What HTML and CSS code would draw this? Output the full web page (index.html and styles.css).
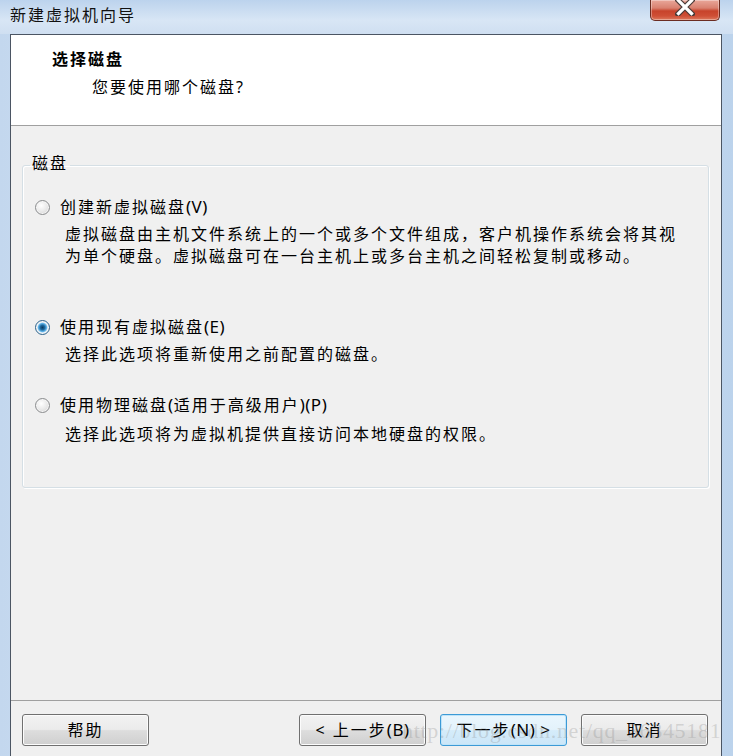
FILE: index.html
```html
<!DOCTYPE html>
<html lang="zh-CN">
<head>
<meta charset="utf-8">
<title>新建虚拟机向导</title>
<link rel="stylesheet" href="styles.css">
</head>
<body>
<div class="window">
  <div class="titlebar">
    <div class="title">新建虚拟机向导</div>
    <div class="close">
      <svg width="20" height="17" viewBox="0 0 20 17">
        <path d="M3 1 L17 15 M17 1 L3 15" stroke="#4a3b38" stroke-width="5.5" stroke-linecap="square" fill="none"/>
        <path d="M3.5 1.5 L16.5 14.5 M16.5 1.5 L3.5 14.5" stroke="#ffffff" stroke-width="3.2" stroke-linecap="square" fill="none"/>
      </svg>
    </div>
  </div>
  <div class="client">
    <div class="header">
      <div class="heading">选择磁盘</div>
      <div class="subheading">您要使用哪个磁盘?</div>
    </div>
    <div class="content">
      <fieldset class="group">
        <legend class="legend">磁盘</legend>
        <div class="option opt1">
          <div class="opt-label"><span class="radio"></span><span>创建新虚拟磁盘<span class="lat">(V)</span></span></div>
          <div class="opt-desc">虚拟磁盘由主机文件系统上的一个或多个文件组成，客户机操作系统会将其视<br>为单个硬盘。虚拟磁盘可在一台主机上或多台主机之间轻松复制或移动。</div>
        </div>
        <div class="option opt2">
          <div class="opt-label"><span class="radio checked"></span><span>使用现有虚拟磁盘<span class="lat">(E)</span></span></div>
          <div class="opt-desc">选择此选项将重新使用之前配置的磁盘。</div>
        </div>
        <div class="option opt3">
          <div class="opt-label"><span class="radio"></span><span>使用物理磁盘<span class="lat">(</span>适用于高级用户<span class="lat">)(P)</span></span></div>
          <div class="opt-desc">选择此选项将为虚拟机提供直接访问本地硬盘的权限。</div>
        </div>
      </fieldset>
    </div>
    <div class="footer">
      <button class="btn">帮助</button>
      <div class="spacer"></div>
      <button class="btn">&lt; 上一步<span class="lat">(B)</span></button>
      <button class="btn default">下一步<span class="lat">(N) &gt;</span></button>
      <button class="btn">取消</button>
    </div>
  </div>
  <div class="watermark">http://blog.csdn.net/qq_36345181</div>
</div>
</body>
</html>
```
FILE: styles.css
```css
html, body {
  margin: 0;
  padding: 0;
}
body {
  width: 733px;
  height: 756px;
  overflow: hidden;
  font-family: "Noto Sans", "Noto Sans CJK SC", sans-serif;
  font-size: 16px;
  letter-spacing: 2px;
  color: #000;
}
.lat {
  letter-spacing: 0.5px;
  font-size: 17px;
}
.window {
  position: relative;
  width: 733px;
  height: 756px;
  display: flex;
  flex-direction: column;
  background: linear-gradient(90deg, #c3d7ee 0%, #d6e5f5 30%, #cfe0f2 60%, #bcd3ec 100%);
}
.titlebar {
  height: 34px;
  display: flex;
  justify-content: space-between;
  align-items: flex-start;
  background: linear-gradient(180deg, #bcd3ed 0%, #d8e6f5 60%, #cfdff1 100%);
}
.title {
  padding-left: 10px;
  line-height: 30px;
  font-size: 16px;
  color: #111;
}
.close {
  width: 68px;
  height: 20px;
  margin-right: 13px;
  border: 1px solid #6b2d22;
  border-top: none;
  border-radius: 0 0 5px 5px;
  background: linear-gradient(180deg, #e9a79a 0%, #d98170 40%, #c7432b 55%, #cf4f36 80%, #dd7a5e 100%);
  display: flex;
  justify-content: center;
  align-items: flex-start;
  box-shadow: inset 0 0 0 1px rgba(255,255,255,0.35);
}
.close svg {
  display: block;
  margin-top: -1px;
}
.client {
  flex: 1;
  display: flex;
  flex-direction: column;
  margin: 0 11px 0 10px;
  border: 1px solid #4b5563;
  border-bottom: none;
  background: #f0f0f0;
}
.header {
  background: #fff;
  border-bottom: 1px solid #a0a0a0;
  box-sizing: border-box;
  height: 91px;
  padding-top: 13px;
}
.heading {
  font-weight: bold;
  line-height: 22px;
  padding-left: 41px;
}
.subheading {
  line-height: 22px;
  margin-top: 6px;
  padding-left: 81px;
}
.content {
  flex: 1;
  padding: 27px 12px 0 11px;
}
.group {
  margin: 0;
  padding: 19px 0 42px 0;
  border: 1px solid #d5dfe5;
  border-radius: 3px;
  box-shadow: inset 1px 1px 0 #fff, 1px 1px 0 #fff;
}
.legend {
  padding: 0 2px 4px 2px;
  margin-left: 7px;
  line-height: 20px;
}
.option .opt-label {
  display: flex;
  align-items: center;
  line-height: 22px;
  padding-left: 13px;
}
.opt-desc {
  line-height: 22px;
  padding-left: 42px;
  margin-top: 5px;
}
.opt2 {
  margin-top: 49px;
}
.opt3 {
  margin-top: 29px;
}
.opt3 .opt-desc {
  margin-top: 7px;
}
.radio {
  width: 13px;
  height: 13px;
  border: 1px solid #8a8c8e;
  border-radius: 50%;
  margin-left: -1px;
  margin-right: 10px;
  background: radial-gradient(circle at 40% 35%, #ffffff 0%, #ececec 45%, #cfcfcf 100%);
  box-shadow: inset 0 0 0 1px #f6f6f6;
  flex: none;
}
.radio.checked {
  border-color: #2c628b;
  background: radial-gradient(circle, #0b3b5e 0%, #1e6aa0 25%, #5fb3e8 45%, #e8f2f9 58%, #dbe8f2 100%);
}
.footer {
  border-top: 1px solid #a0a0a0;
  height: 56px;
  box-sizing: border-box;
  display: flex;
  align-items: flex-start;
  padding: 13px 13px 0 11px;
  gap: 14px;
}
.spacer {
  flex: 1;
}
.btn {
  width: 127px;
  height: 32px;
  margin: 0;
  padding: 0;
  border: 1px solid #707070;
  border-radius: 3px;
  background: linear-gradient(180deg, #f2f2f2 0%, #ebebeb 48%, #dddddd 52%, #cfcfcf 100%);
  box-shadow: inset 0 0 0 1px #fcfcfc;
  font-family: "Noto Sans", "Noto Sans CJK SC", sans-serif;
  font-size: 16px;
  letter-spacing: 2px;
  color: #000;
  line-height: 30px;
}
.btn.default {
  border-color: #3c9ad6;
  background: linear-gradient(180deg, #eaf6fd 0%, #e3f2fb 48%, #d5ecfa 52%, #cbe6f8 100%);
  box-shadow: inset 0 0 0 1px #bfe4f9;
}
.watermark {
  position: absolute;
  left: 402px;
  top: 716px;
  font-family: "Liberation Serif", serif;
  font-size: 22px;
  letter-spacing: 0.7px;
  color: rgba(140, 140, 140, 0.3);
  line-height: 30px;
  white-space: nowrap;
  pointer-events: none;
}
```
